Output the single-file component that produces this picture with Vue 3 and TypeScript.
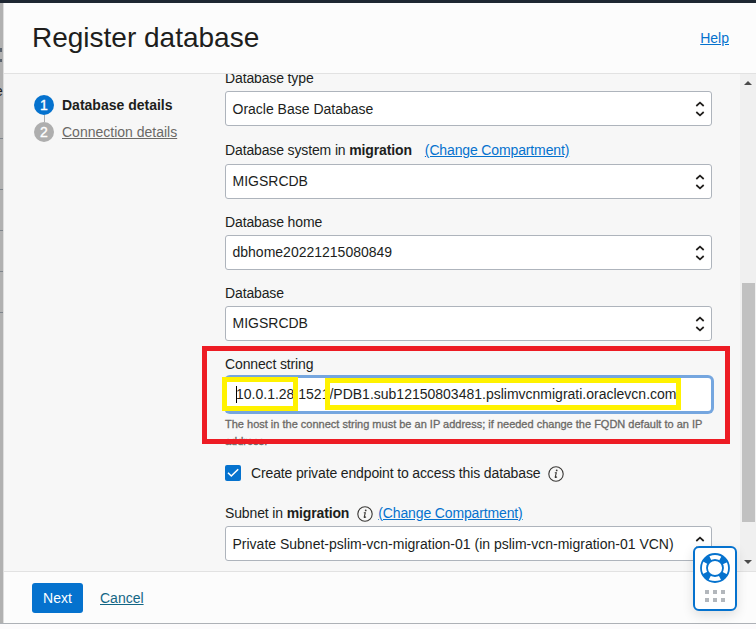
<script setup lang="ts">
interface SelectField {
  label: string
  compartment?: string
  value: string
  size: string
}

const fields: SelectField[] = [
  { label: 'Database type', value: 'Oracle Base Database', size: 'first' },
  { label: 'Database system in', compartment: 'migration', value: 'MIGSRCDB', size: 'tall' },
  { label: 'Database home', value: 'dbhome20221215080849', size: 'regular' },
  { label: 'Database', value: 'MIGSRCDB', size: 'regular' },
]
const connectString = '10.0.1.28:1521/PDB1.sub12150803481.pslimvcnmigrati.oraclevcn.com'
</script>

<template>
  <div class="page">
    <div class="topbar"></div>
    <div class="main">
      <div class="backdrop">
        <span class="back-sort"><i class="sort-up"></i><i class="sort-down"></i></span>
        <span class="back-letter">e</span>
        <i class="back-rule first-rule"></i>
        <i v-for="n in 4" :key="n" class="back-rule"></i>
      </div>
      <section class="panel">
        <header class="header">
          <h1>Register database</h1>
          <a class="link">Help</a>
        </header>
        <div class="body">
          <nav class="steps">
            <div class="step current"><span class="dot">1</span><b>Database details</b></div>
            <div class="connector"></div>
            <div class="step"><span class="dot">2</span><a>Connection details</a></div>
          </nav>
          <form class="form" @submit.prevent>
            <div v-for="(f, i) in fields" :key="i" class="field" :class="f.size">
              <div class="label">
                {{ f.label }}<template v-if="f.compartment">&nbsp;<b>{{ f.compartment }}</b>
                <a class="link change">(Change Compartment)</a></template>
              </div>
              <div class="select">
                <span>{{ f.value }}</span>
                <svg width="10" height="16" viewBox="0 0 10 16"><path d="M1.3 5 5 1.7 8.7 5M1.3 11 5 14.3 8.7 11" /></svg>
              </div>
            </div>
            <div class="field connect">
              <div class="label">Connect string</div>
              <div class="select focused"><i class="caret"></i><span>{{ connectString }}</span></div>
              <p class="hint">The host in the connect string must be an IP address; if needed change the FQDN default to an IP<br />address.</p>
            </div>
            <div class="check-row">
              <span class="checkbox"><svg width="16" height="16" viewBox="0 0 16 16"><path d="M3 7.8 6.3 11 13.2 4.2" /></svg></span>
              <span>Create private endpoint to access this database</span>
              <svg class="info" width="16" height="16" viewBox="0 0 16 16"><circle cx="8" cy="8" r="7.2" /><path d="M6.8 6.7H8.3L7.2 11.2Q7.5 11.8 9 10.8" /><circle class="tip" cx="8.7" cy="4.4" r=".9" /></svg>
            </div>
            <div class="field subnet">
              <div class="label">
                Subnet in&nbsp;<b>migration</b>
                <svg class="info" width="16" height="16" viewBox="0 0 16 16"><circle cx="8" cy="8" r="7.2" /><path d="M6.8 6.7H8.3L7.2 11.2Q7.5 11.8 9 10.8" /><circle class="tip" cx="8.7" cy="4.4" r=".9" /></svg>
                <a class="link">(Change Compartment)</a>
              </div>
              <div class="select">
                <span>Private Subnet-pslim-vcn-migration-01 (in pslim-vcn-migration-01 VCN)</span>
                <svg width="10" height="16" viewBox="0 0 10 16"><path d="M1.3 5 5 1.7 8.7 5M1.3 11 5 14.3 8.7 11" /></svg>
              </div>
            </div>
          </form>
          <div class="scrollbar">
            <svg width="8" height="4" viewBox="0 0 8 4"><path d="M0 4 4 0 8 4Z" /></svg>
            <i class="thumb"></i>
            <svg width="8" height="4" viewBox="0 0 8 4"><path d="M0 0 4 4 8 0Z" /></svg>
          </div>
        </div>
        <footer class="footer">
          <button type="button">Next</button>
          <a>Cancel</a>
        </footer>
      </section>
    </div>
    <div class="bottom"></div>

    <div class="mark red"></div>
    <div class="mark yellow host"></div>
    <div class="mark yellow service"></div>
    <div class="support">
      <svg width="32" height="32" viewBox="0 0 32 32">
        <circle class="ring" cx="16" cy="16" r="11" />
        <circle class="edge" cx="16" cy="16" r="14" />
        <circle class="edge" cx="16" cy="16" r="8" />
      </svg>
      <div class="dots"><i v-for="n in 6" :key="n"></i></div>
    </div>
  </div>
</template>

<style>
body { margin: 0; overflow: hidden; }
</style>

<style scoped>
* { box-sizing: border-box; }
.page { position: relative; width: 756px; height: 629px; overflow: hidden; display: flex; flex-direction: column; background: #fcfbfc; color: #201e1c; font: 14px/20px "Liberation Sans", Arial, sans-serif; }
.topbar { height: 3px; background: #1e2732; }
.main { display: flex; height: 621px; border-bottom: 1px solid #adb1b6; }
.backdrop { width: 3px; overflow: hidden; background: #b1b1b1; display: flex; flex-direction: column; flex: none; }
.back-sort { margin-top: 45px; height: 14px; display: flex; flex-direction: column; justify-content: space-between; }
.sort-up, .sort-down { width: 2px; height: 4px; background: #5c6570; }
.sort-down { height: 3px; }
.back-letter { height: 20px; margin-top: 19px; margin-left: -5px; width: 8px; }
.back-rule { flex: none; height: 1px; margin-top: 40px; background: #7f858c; }
.first-rule { margin-top: 37px; }
.first-rule + .back-rule { margin-top: 50px; }
.panel { flex: 1; min-width: 0; border-left: 1px solid #dedede; display: flex; flex-direction: column; background: #fcfcfc; }
.header { height: 71px; display: flex; justify-content: space-between; align-items: center; padding: 0 27px 0 28px; border-bottom: 1px solid #e2e2e2; }
h1 { margin: 0; font-size: 28px; line-height: 36px; font-weight: 400; }
a { text-decoration: underline; text-underline-offset: 1px; }
.link { color: #0572ce; }
.body { height: 497px; overflow: hidden; display: flex; background: #f7f7f7; }
.steps { width: 221px; padding: 21px 0 0 30px; flex: none; }
.step { display: flex; align-items: center; gap: 8px; height: 20px; color: #6b6966; }
.current { color: #201e1c; }
.dot { width: 20px; height: 20px; border-radius: 50%; background: #aeaeae; color: #fff; text-align: center; -webkit-text-stroke: .35px #fff; }
.current .dot { background: #0572ce; }
.connector { width: 1px; height: 7px; margin-left: 10px; background: #aeaeae; }
.form { width: 487px; flex: none; }
.label { height: 20px; display: flex; align-items: center; white-space: nowrap; letter-spacing: -.135px; }
.first .label { margin-top: -6px; }
.first .select { margin-top: 3px; padding-bottom: 0; }
.tall { margin-top: 14px; }
.tall .select { margin-top: 4px; }
.regular { margin-top: 13px; }
.change { margin-left: 13px; }
.select { height: 35px; margin-top: 3px; border: 1px solid #aeb4bc; border-radius: 3px; background: #fff; display: flex; align-items: center; justify-content: space-between; padding: 0 6px 0 6.5px; white-space: nowrap; }
.tall .select span, .regular .select span { margin-bottom: 2px; }
.select svg path { fill: none; stroke: #201e1c; stroke-width: 1.7; }
.connect { margin-top: 13px; }
.focused { height: 33px; margin: 4px 1px 0 2px; border: 0; box-shadow: 0 0 0 3px #75a6df; justify-content: flex-start; padding-left: 9px; }
.focused span { margin-bottom: 2px; }
.focused { margin-right: 1px; }
.caret { width: 1px; height: 17px; background: #000; margin-right: -1px; }
.hint { margin: 5px 0 0; font-size: 11px; line-height: 17px; color: #6b6966; -webkit-text-stroke: .3px #6b6966; white-space: nowrap; }
.check-row { display: flex; align-items: center; height: 20px; margin-top: 13px; letter-spacing: -.135px; }
.checkbox { width: 16px; height: 16px; margin-right: 10px; border-radius: 2px; background: #0572ce; display: flex; }
.checkbox path { fill: none; stroke: #fff; stroke-width: 1.6; }
.info { fill: none; stroke: #3a3836; stroke-width: 1.1; margin: 1px 5px 0 8px; flex: none; }
.info .tip { fill: #3a3836; stroke: none; }
.subnet { margin-top: 20px; }
.scrollbar { width: 16px; margin-left: auto; background: #f0f0f0; display: flex; flex-direction: column; align-items: center; padding: 7px 0 7px; }
.scrollbar svg { fill: #4b4b4b; flex: none; }
.thumb { width: 13px; height: 239px; margin: 198px 0 auto 1px; background: #c1c1c1; }
.footer { flex: 1; border-top: 1px solid #e2e2e2; display: flex; align-items: center; padding-left: 28px; gap: 17px; }
button { width: 51px; height: 30px; padding: 0; border: 0; border-radius: 3px; background: #0572ce; color: #fff; font: inherit; }
.footer a { color: #136685; }
.mark { position: absolute; border: 5px solid; }
.red { left: 202px; top: 346px; width: 528px; height: 98px; border-color: #ed1c24; }
.yellow { border-color: #fff200; }
.host { left: 222px; top: 377px; width: 76px; height: 34px; }
.service { left: 325px; top: 378px; width: 356px; height: 32px; }
.support { position: absolute; left: 693px; top: 546px; width: 44px; height: 65px; border: 2px solid #0572ce; border-radius: 6px; background: #fff; box-shadow: 0 4px 12px rgba(0, 0, 0, .12); display: flex; flex-direction: column; align-items: center; padding-top: 4px; }
.ring { fill: none; stroke: #0572ce; stroke-width: 6; stroke-dasharray: 6.8 10.48; stroke-dashoffset: -5.24; }
.edge { fill: none; stroke: #0572ce; stroke-width: 1.8; }
.dots { display: grid; grid-template-columns: repeat(3, 4px); gap: 4px; margin-top: 6px; }
.dots i { width: 4px; height: 4px; background: #b3b7bc; }
</style>
